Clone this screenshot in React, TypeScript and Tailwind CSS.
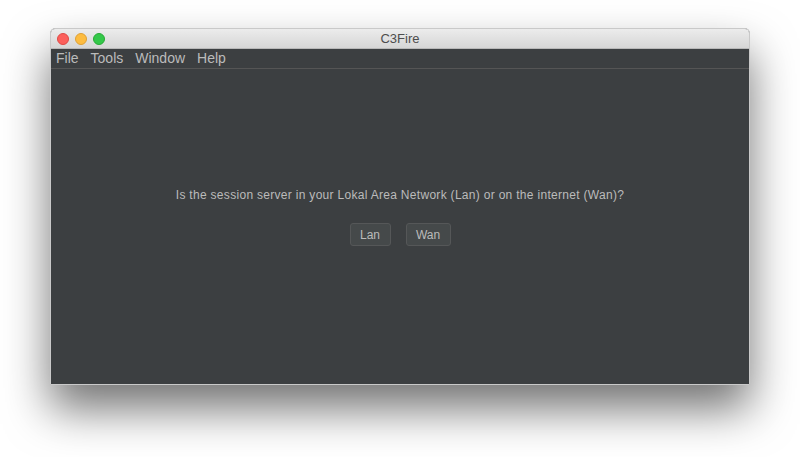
export default function App() {
  const menus = ["File", "Tools", "Window", "Help"];

  return (
    <div
      className="h-[457px] w-[800px] bg-white pl-[50px] pt-[28px]"
      style={{ fontFamily: '"Liberation Sans", "DejaVu Sans", sans-serif' }}
    >
      <div className="flex h-[357px] w-[700px] flex-col overflow-hidden rounded-t-[5px] border border-[#c9c9c9] bg-[#3c3f41] shadow-[0_24px_45px_rgba(0,0,0,0.55)]">
        {/* title bar */}
        <div className="relative flex h-[20px] shrink-0 items-center justify-center bg-gradient-to-b from-[#ececec] to-[#d6d6d6] border-b border-[#b8b8b8]">
          <div className="absolute left-[6px] top-[4px] flex gap-[6px]">
            <span className="h-[12px] w-[12px] rounded-full bg-[#fc605c] border border-[#de4a46]" />
            <span className="h-[12px] w-[12px] rounded-full bg-[#fdbc40] border border-[#dea035]" />
            <span className="h-[12px] w-[12px] rounded-full bg-[#34c84a] border border-[#27aa35]" />
          </div>
          <span className="text-[13px] text-[#4d4d4d]">C3Fire</span>
        </div>

        {/* menu bar */}
        <div className="flex h-[20px] shrink-0 items-center gap-[12px] border-b border-[#555555] px-[5px] text-[14px] text-[#bbbbbb]">
          {menus.map((m) => (
            <span key={m}>{m}</span>
          ))}
        </div>

        {/* content */}
        <div className="flex flex-1 flex-col items-center pt-[117px]">
          <p className="text-[12px] tracking-[0.3px] text-[#bbbbbb]">
            Is the session server in your Lokal Area Network (Lan) or on the internet (Wan)?
          </p>
          <div className="mt-[19px] flex gap-[15px]">
            <button className="h-[23px] w-[41px] rounded-[3px] border border-[#555758] bg-[#45494a] text-[12px] text-[#bbbbbb]">
              Lan
            </button>
            <button className="h-[23px] w-[45px] rounded-[3px] border border-[#555758] bg-[#45494a] text-[12px] text-[#bbbbbb]">
              Wan
            </button>
          </div>
        </div>
      </div>
    </div>
  );
}
